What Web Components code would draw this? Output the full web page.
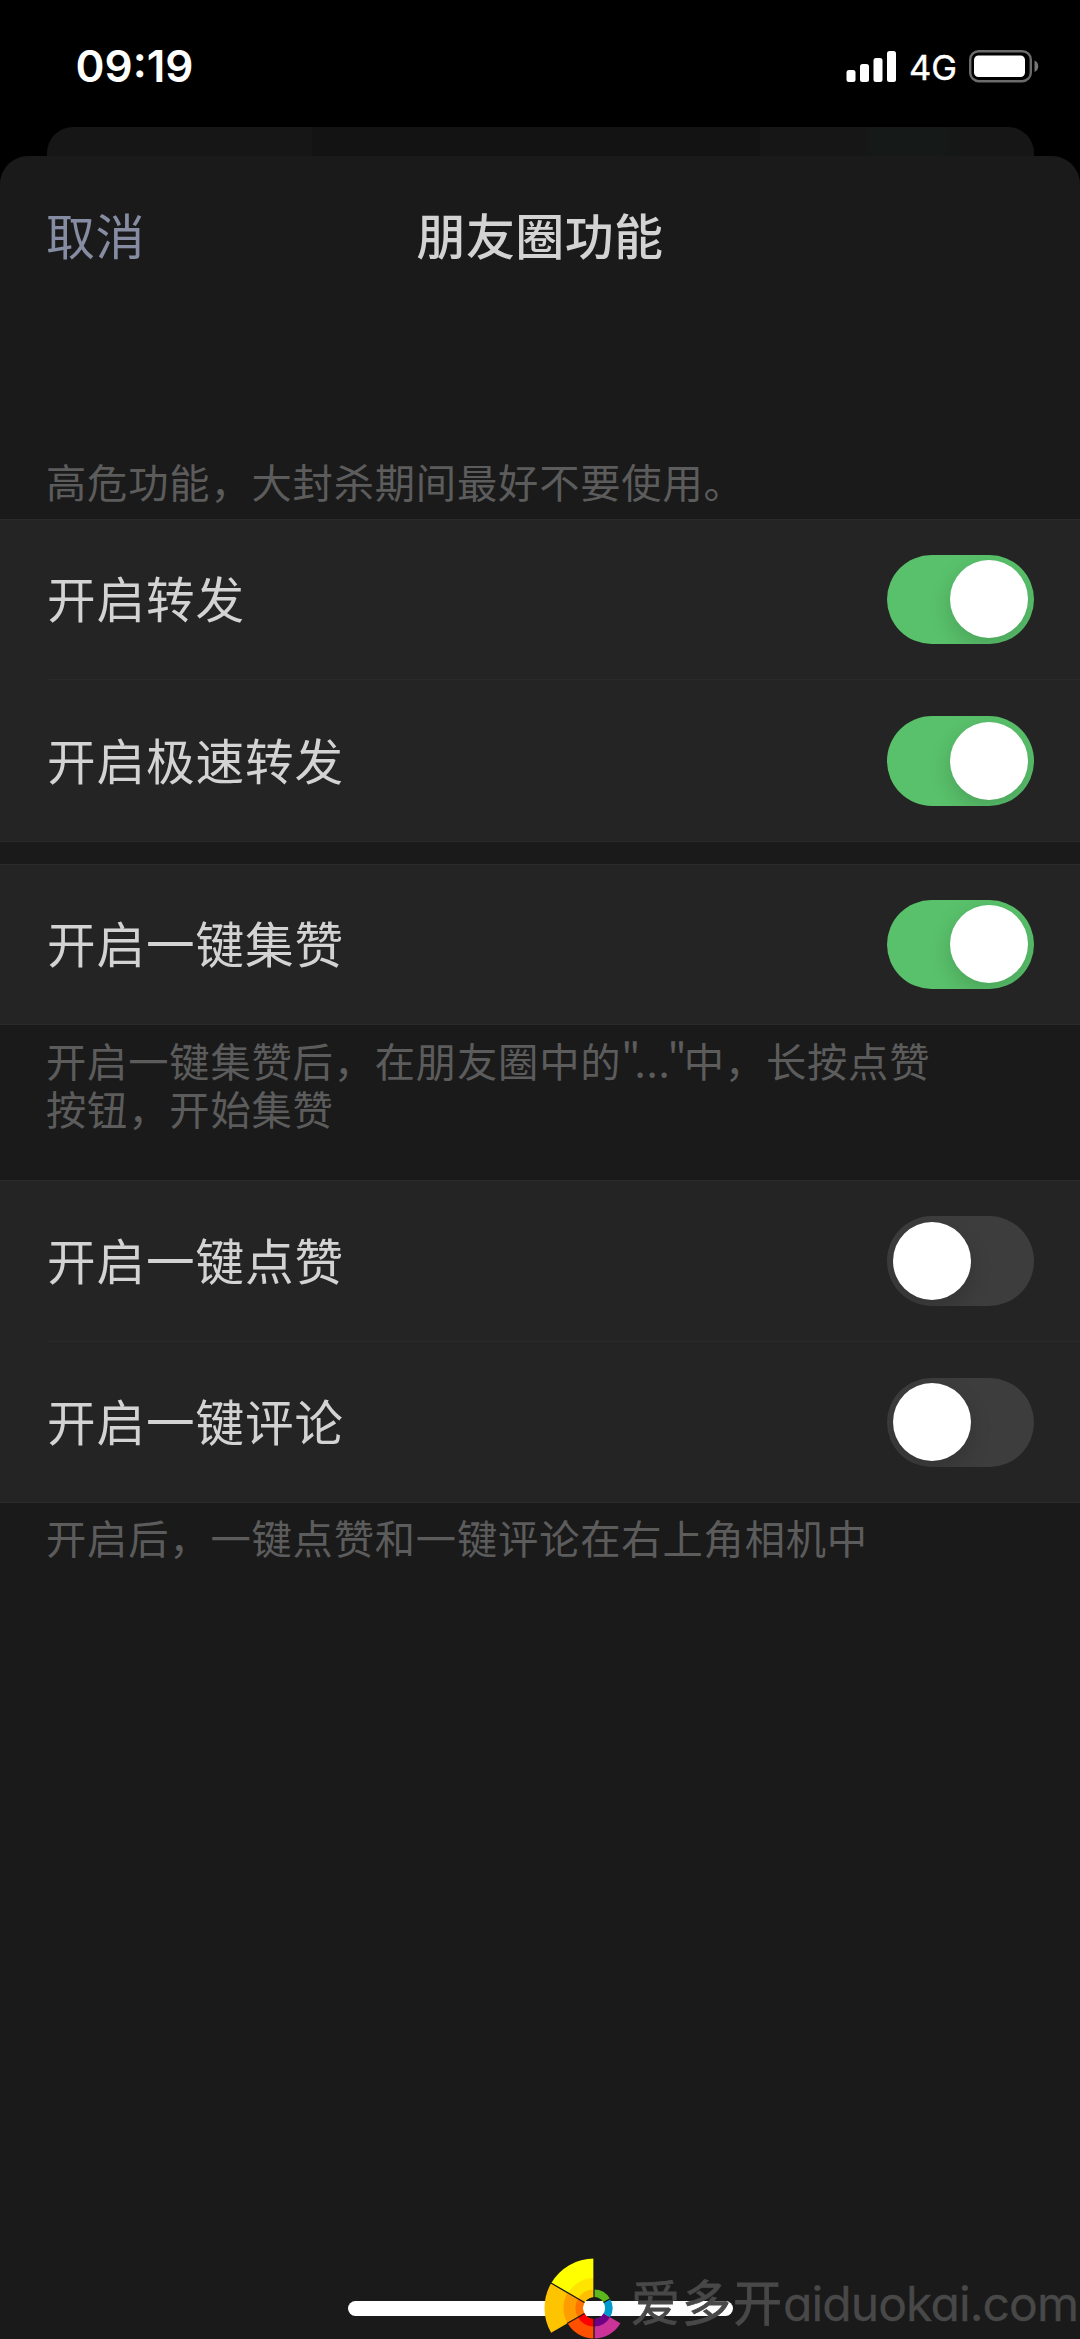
<!DOCTYPE html>
<html lang="zh-CN">
<head>
<meta charset="utf-8">
<title>朋友圈功能</title>
<style>
  html, body {
    margin: 0;
    height: 100%;
    background: #000;
    overflow: hidden;
  }
  body {
    font-family: "Noto Sans CJK SC", sans-serif;
    color: #d3d3d3;
  }
  .quote { letter-spacing: -6px; }
  .quote.end {
    margin-left: -3px;
    margin-right: 3px;
  }
</style>
</head>
<body>

<phone-screen>
  <status-bar slot="status" time="09:19" network="4G"></status-bar>

  <sheet-header>
    <span slot="cancel">取消</span>
    朋友圈功能
  </sheet-header>

  <settings-note style="--before: 143px; --after: 14px">高危功能，大封杀期间最好不要使用。</settings-note>
  <settings-group>
    <settings-row on>开启转发</settings-row>
    <settings-row on>开启极速转发</settings-row>
  </settings-group>

  <settings-group style="margin-top: 22px">
    <settings-row on>开启一键集赞</settings-row>
  </settings-group>
  <settings-note style="--before: 11px; --after: 48px">开启一键集赞后，在朋友圈中的<span class="quote">"</span>...<span class="quote end">"</span>中，长按点赞<br>按钮，开始集赞</settings-note>

  <settings-group>
    <settings-row>开启一键点赞</settings-row>
    <settings-row>开启一键评论</settings-row>
  </settings-group>
  <settings-note style="--before: 10px; --after: 0px">开启后，一键点赞和一键评论在右上角相机中</settings-note>

  <home-indicator slot="overlay"></home-indicator>
  <site-watermark slot="overlay" name="爱多开" site="aiduokai.com"></site-watermark>
</phone-screen>

<script>
class PhoneScreen extends HTMLElement {
  constructor() {
    super();
    this.attachShadow( { mode: 'open' } );
    this.shadowRoot.innerHTML = `
    <style>
      :host {
        display: flex;
        flex-direction: column;
        position: relative;
        width: 1080px;
        height: 2339px;
        background: #000;
        overflow: hidden;
      }
      .behind {
        height: 29px;
        margin: 0 46px 0 47px;
        border-radius: 26px 26px 0 0;
        background: linear-gradient(90deg, #161616 265px, #131313 265px 713px, #161616 713px 815px, #151918 825px 895px, #161616 915px);
      }
      .sheet {
        flex: 1;
        border-radius: 28px 28px 0 0;
        background: #1a1a1a;
      }
    </style>
    <slot name="status"></slot>
    <div class="behind"></div>
    <div class="sheet"><slot></slot></div>
    <slot name="overlay"></slot>
    `;
  }
}

class StatusBar extends HTMLElement {
  constructor() {
    super();
    this.attachShadow( { mode: 'open' } );
  }

  connectedCallback() {
    this.shadowRoot.innerHTML = `
    <style>
      :host {
        display: flex;
        align-items: center;
        box-sizing: border-box;
        height: 126.5px;
        padding: 6px 41px 0 75.5px;
        color: #fff;
        font-family: Inter, sans-serif;
      }
      .time {
        flex: 1;
        font-size: 44px;
        font-weight: 600;
        line-height: 50px;
      }
      .network {
        margin: 3px 12px 0 12px;
        font-size: 34.5px;
        line-height: 40px;
        -webkit-text-stroke: 0.4px #fff;
      }
      svg { display: block; }
    </style>
    <span class="time">${this.getAttribute( 'time' )}</span>
    <svg width="51" height="32" fill="#fff">
      <rect x="0.5" y="20" width="9" height="12" rx="2.5"/>
      <rect x="14" y="14" width="9" height="18" rx="2.5"/>
      <rect x="27.5" y="8" width="9" height="24" rx="2.5"/>
      <rect x="41" y="1" width="9" height="31" rx="2.5"/>
    </svg>
    <span class="network">${this.getAttribute( 'network' )}</span>
    <svg width="70" height="34">
      <rect x="1.2" y="2.2" width="60.6" height="30" rx="8.5" fill="none" stroke="#6b6b6b" stroke-width="2.4"/>
      <rect x="5" y="6.5" width="51" height="21.5" rx="4.5" fill="#fff"/>
      <path d="M65.5 11.5c5 2 5 9.5 0 11.5z" fill="#777"/>
    </svg>
    `;
  }
}

class SheetHeader extends HTMLElement {
  constructor() {
    super();
    this.attachShadow( { mode: 'open' } );
    this.shadowRoot.innerHTML = `
    <style>
      :host {
        display: grid;
        grid-template-columns: 1fr auto 1fr;
        align-items: center;
        box-sizing: border-box;
        height: 158px;
        padding: 0 46px 2px;
        font-size: 49px;
        line-height: 60px;
        letter-spacing: 0.4px;
      }
      .cancel { color: #868da3; }
      .title { font-weight: 500; }
    </style>
    <div class="cancel"><slot name="cancel"></slot></div>
    <div class="title"><slot></slot></div>
    `;
  }
}

class SettingsNote extends HTMLElement {
  constructor() {
    super();
    this.attachShadow( { mode: 'open' } );
    this.shadowRoot.innerHTML = `
    <style>
      :host {
        display: block;
        padding: var(--before) 40px var(--after) 46px;
        color: #5c5c5c;
        font-size: 40.3px;
        line-height: 48px;
        letter-spacing: 0.8px;
        white-space: nowrap;
      }
    </style>
    <slot></slot>
    `;
  }
}

class SettingsGroup extends HTMLElement {
  constructor() {
    super();
    this.attachShadow( { mode: 'open' } );
    this.shadowRoot.innerHTML = `
    <style>
      :host {
        display: block;
        background: #242424;
        box-shadow: inset 0 1px #2b2b2b, inset 0 -1px #2b2b2b;
      }
      ::slotted(settings-row:not(:last-child)) { --line: #2a2a2a; }
    </style>
    <slot></slot>
    `;
  }
}

class SettingsRow extends HTMLElement {
  constructor() {
    super();
    this.attachShadow( { mode: 'open' } );
    this.shadowRoot.innerHTML = `
    <style>
      :host {
        display: flex;
        align-items: center;
        justify-content: space-between;
        box-sizing: border-box;
        height: 161.5px;
        padding: 0 46px 0 47px;
        background: linear-gradient(var(--line, transparent), var(--line, transparent)) 47px 100% / 100% 1px no-repeat;
        font-size: 48.6px;
        line-height: 60px;
        letter-spacing: 0.9px;
      }
      .label { padding-bottom: 4px; }
    </style>
    <span class="label"><slot></slot></span>
    <toggle-switch></toggle-switch>
    `;
  }

  connectedCallback() {
    this.shadowRoot.querySelector( 'toggle-switch' ).toggleAttribute( 'on', this.hasAttribute( 'on' ) );
  }
}

class ToggleSwitch extends HTMLElement {
  constructor() {
    super();
    this.attachShadow( { mode: 'open' } );
    this.shadowRoot.innerHTML = `
    <style>
      :host {
        display: flex;
        align-items: center;
        box-sizing: border-box;
        width: 147px;
        height: 89.5px;
        padding: 0 6px 0 5.5px;
        border-radius: 45px;
        background: #3d3d3d;
        overflow: hidden;
      }
      :host([on]) {
        justify-content: flex-end;
        background: #59c16b;
      }
      .knob {
        width: 78px;
        height: 78px;
        border-radius: 50%;
        background: #fff;
        box-shadow: 0 8px 22px rgba(0, 0, 0, 0.16);
      }
    </style>
    <div class="knob"></div>
    `;
    this.addEventListener( 'click', () => this.toggleAttribute( 'on' ) );
  }
}

class HomeIndicator extends HTMLElement {
  constructor() {
    super();
    this.attachShadow( { mode: 'open' } );
    this.shadowRoot.innerHTML = `
    <style>
      :host {
        position: absolute;
        left: 348px;
        bottom: 23px;
        width: 385px;
        height: 15px;
        border-radius: 8px;
        background: #fff;
      }
    </style>
    `;
  }
}

class SiteWatermark extends HTMLElement {
  constructor() {
    super();
    this.attachShadow( { mode: 'open' } );
  }

  // ring segment between two radii, angles in degrees
  segment( from, to, inner, outer, color ) {
    const point = ( r, a ) => {
      const rad = a * Math.PI / 180;
      return ( r * Math.cos( rad ) ).toFixed( 2 ) + ' ' + ( r * Math.sin( rad ) ).toFixed( 2 );
    };
    return `<path fill="${color}" d="M${point( inner, from )}L${point( outer, from )}A${outer} ${outer} 0 0 1 ${point( outer, to )}L${point( inner, to )}A${inner} ${inner} 0 0 0 ${point( inner, from )}z"/>`;
  }

  connectedCallback() {
    const rings = [
      [ -150, -90, 11, 49.5, '#ffff00' ],
      [ -150, -90, 11, 30, '#ffe400' ],
      [ -150, -90, 11, 18.5, '#ffbf00' ],
      [ 150, 210, 11, 49.5, '#ffc400' ],
      [ 150, 210, 11, 30.5, '#ff9d00' ],
      [ 150, 210, 11, 18.5, '#ff7300' ],
      [ 90, 150, 11, 30.5, '#ff5000' ],
      [ 90, 150, 11, 18.5, '#ff0000' ],
      [ 30, 90, 11, 30.5, '#cc3399' ],
      [ 30, 90, 11, 18.5, '#6f0085' ],
      [ -30, 30, 11, 18.5, '#0099cc' ],
      [ -90, -30, 11, 18.5, '#5cb81c' ]
    ];
    this.shadowRoot.innerHTML = `
    <style>
      :host {
        position: absolute;
        right: 0;
        bottom: 0;
        display: flex;
        align-items: flex-start;
        width: 536px;
        height: 81px;
        color: #484848;
        white-space: nowrap;
      }
      svg { flex: none; }
      .name {
        width: 152px;
        margin: 12px 0 0 -13px;
        font-size: 49px;
        line-height: 60px;
        letter-spacing: 2px;
        -webkit-text-stroke: 0.8px #484848;
      }
      .site {
        margin-top: 16px;
        font-family: Inter, sans-serif;
        font-feature-settings: "cv11";
        font-size: 48px;
        line-height: 60px;
        letter-spacing: -0.9px;
        -webkit-text-stroke: 0.3px #484848;
      }
    </style>
    <svg width="100" height="81" viewBox="-50 -50 100 81">
      ${rings.map( ( r ) => this.segment( ...r ) ).join( '' )}
      <path d="M0 -50V-11M-43 -25L-9.5 -5.5M-27 15.5L-9.5 5.5M0 11V31M9.5 -5.5L17 -9.8" stroke="#1a1a1a" stroke-width="1.3"/>
    </svg>
    <span class="name">${this.getAttribute( 'name' )}</span>
    <span class="site">${this.getAttribute( 'site' )}</span>
    `;
  }
}

customElements.define( 'phone-screen', PhoneScreen );
customElements.define( 'status-bar', StatusBar );
customElements.define( 'sheet-header', SheetHeader );
customElements.define( 'settings-note', SettingsNote );
customElements.define( 'settings-group', SettingsGroup );
customElements.define( 'settings-row', SettingsRow );
customElements.define( 'toggle-switch', ToggleSwitch );
customElements.define( 'home-indicator', HomeIndicator );
customElements.define( 'site-watermark', SiteWatermark );
</script>
</body>
</html>
